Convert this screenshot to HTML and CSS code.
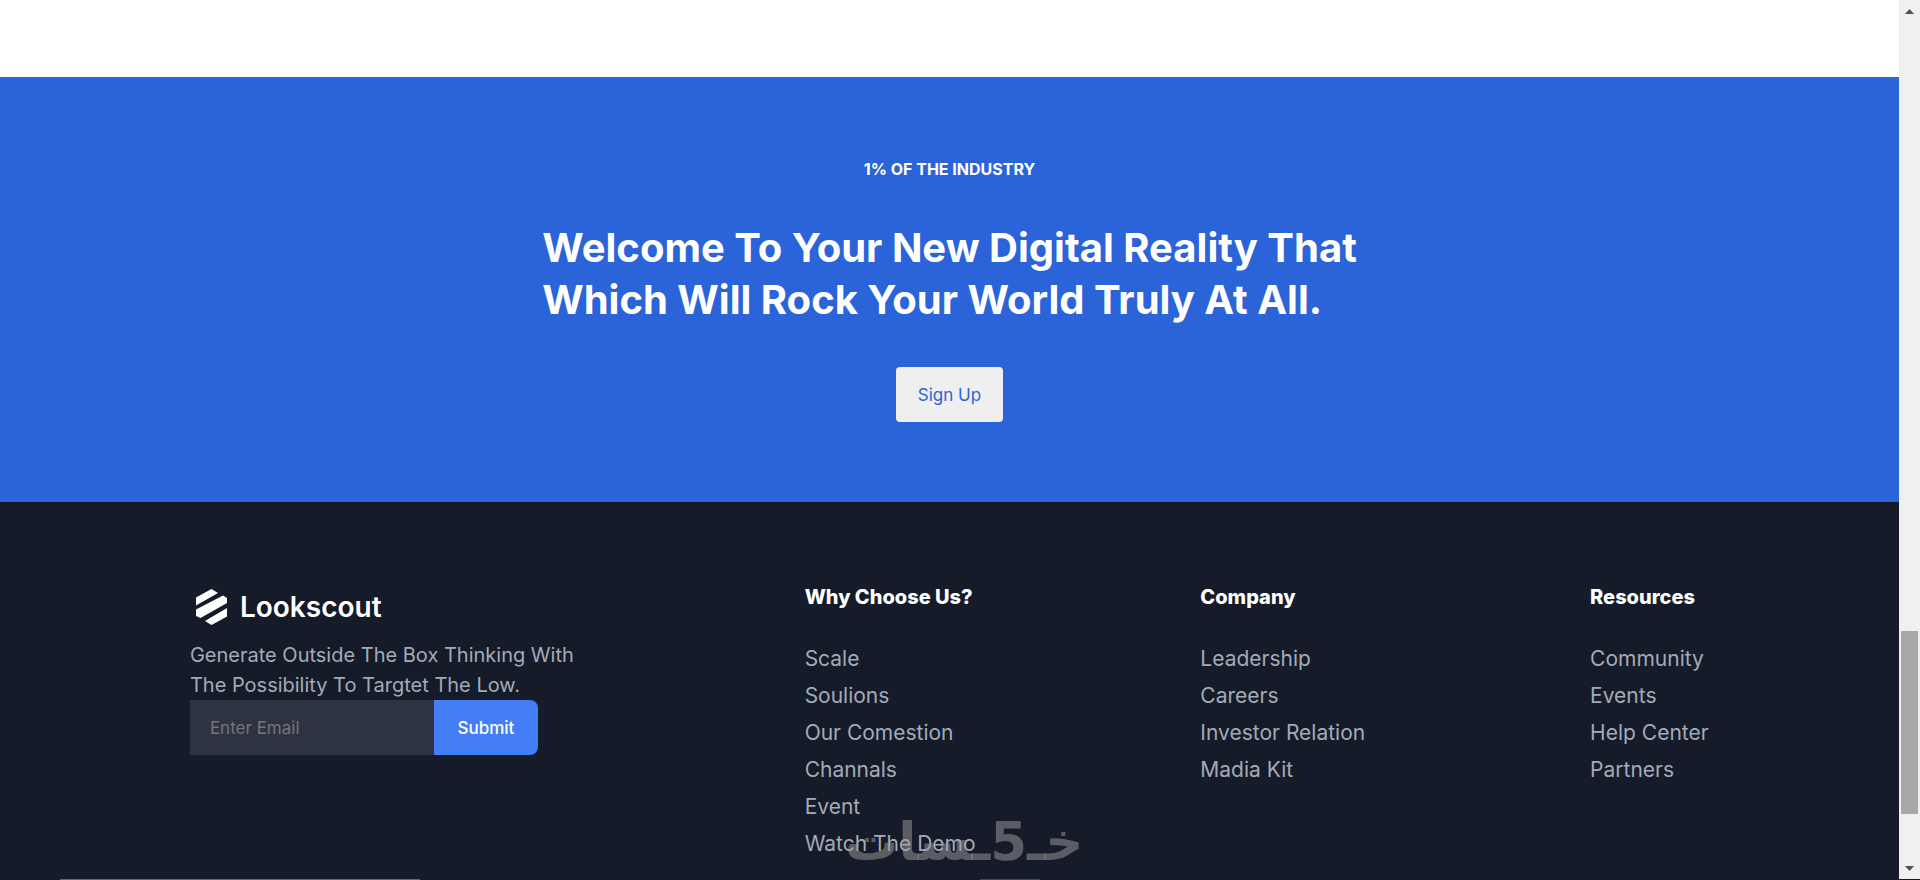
FILE: index.html
```
<!DOCTYPE html>
<html lang="en">
<head>
	<meta charset="utf-8">
	<title>Lookscout</title>
	<link rel="stylesheet" href="styles.css">
</head>
<body>
	<div class="page">
		<section class="banner">
			<p class="eyebrow">1% OF THE INDUSTRY</p>
			<h2>Welcome To Your New Digital Reality That<br>Which Will Rock Your World Truly At All.</h2>
			<button class="signup" type="button">Sign Up</button>
		</section>

		<footer class="footer">
			<div class="about">
				<a class="logo" href="#">
					<svg width="31" height="36" viewBox="0 0 31 36" fill="#fff" aria-hidden="true">
						<path d="M0 8.500 15.500 0 22 4 0 16.500z"/>
						<path d="M0 20.500 27 6.500 31 9V14L4.500 29 0 27z"/>
						<path d="M31 19V27.500L15.500 36 9 32z"/>
					</svg>
					<span>Lookscout</span>
				</a>
				<p>Generate Outside The Box Thinking With<br>The Possibility To Targtet The Low.</p>
				<form class="subscribe">
					<input type="email" placeholder="Enter Email" aria-label="Email">
					<button type="button">Submit</button>
				</form>
			</div>
			<div class="links why">
				<h3>Why Choose Us?</h3>
				<ul>
					<li><a href="#">Scale</a></li>
					<li><a href="#">Soulions</a></li>
					<li><a href="#">Our Comestion</a></li>
					<li><a href="#">Channals</a></li>
					<li><a href="#">Event</a></li>
					<li><a href="#">Watch The Demo</a></li>
				</ul>
			</div>
			<div class="links company">
				<h3>Company</h3>
				<ul>
					<li><a href="#">Leadership</a></li>
					<li><a href="#">Careers</a></li>
					<li><a href="#">Investor Relation</a></li>
					<li><a href="#">Madia Kit</a></li>
				</ul>
			</div>
			<div class="links resources">
				<h3>Resources</h3>
				<ul>
					<li><a href="#">Community</a></li>
					<li><a href="#">Events</a></li>
					<li><a href="#">Help Center</a></li>
					<li><a href="#">Partners</a></li>
				</ul>
			</div>
		</footer>
	</div>

	<div class="scrollbar" aria-hidden="true">
		<svg width="9" height="5" viewBox="0 0 9 5"><path d="M0 5 4.500 0 9 5z"/></svg>
		<div class="track"><div class="thumb"></div></div>
		<svg width="9" height="5" viewBox="0 0 9 5"><path d="M0 0H9L4.500 5z"/></svg>
	</div>

	<div class="watermark" dir="rtl" lang="ar">خـ5ـسات</div>
	<div class="edge"><span class="edge-left"></span><span class="edge-mid"></span></div>
</body>
</html>
```
FILE: styles.css
```
* {
	box-sizing: border-box;
	margin: 0;
	padding: 0;
}
body {
	display: flex;
	position: relative;
	height: 100vh;
	overflow: hidden;
	background: #fff;
	font-family: Inter, "Open Sans", sans-serif;
	font-size: 20px;
	line-height: 30px;
}
a {
	color: inherit;
	text-decoration: none;
}
button, input {
	border: none;
	font-family: inherit;
	font-size: 17px;
}
.page {
	flex: 1;
	display: flex;
	flex-direction: column;
	padding-top: 77px;
}

/* banner */
.banner {
	display: flex;
	flex-direction: column;
	align-items: center;
	padding: 80px 20px;
	background: #2b64d9;
	color: #fff;
}
.eyebrow {
	font-size: 16px;
	font-weight: 700;
	line-height: 24px;
}
.banner h2 {
	margin: 41px 0;
	font-size: 40px;
	font-weight: 700;
	line-height: 52px;
}
.signup {
	width: 107px;
	height: 55px;
	border-radius: 4px;
	background: #efefef;
	color: #2b64d9;
}

/* footer */
.footer {
	flex: 1;
	display: flex;
	justify-content: space-between;
	padding: 80px 10% 0;
	background: #151b28;
	color: #a3abb8;
	white-space: nowrap;
}
.about {
	width: 390px;
}
.logo {
	display: flex;
	align-items: center;
	gap: 13px;
	height: 50px;
	margin-bottom: 8px;
	padding-left: 6px;
	color: #fff;
	font-size: 28px;
	font-weight: 600;
}
.subscribe {
	display: flex;
	height: 55px;
}
.subscribe input {
	width: 244px;
	padding: 0 20px;
	background: #2d3342;
	color: #fff;
}
.subscribe input::placeholder {
	color: #757575;
}
.subscribe button {
	width: 104px;
	border-radius: 0 8px 8px 0;
	background: #437ef7;
	color: #fff;
	font-weight: 500;
}
.why {
	width: 171px;
}
.company {
	width: 165px;
}
.resources {
	width: 119px;
}
.links h3 {
	margin-bottom: 28px;
	color: #fff;
	font-size: 20px;
	font-weight: 800;
}
.links ul {
	list-style: none;
}
.links li {
	font-size: 21px;
	line-height: 37px;
}

/* scrollbar */
.scrollbar {
	display: flex;
	flex-direction: column;
	align-items: center;
	width: 21px;
	padding: 9px 2px;
	background: #f0f0f0;
}
.scrollbar svg {
	fill: #505050;
}
.track {
	flex: 1;
	width: 17px;
	padding: 8px 0;
}
.thumb {
	height: 183px;
	margin-top: 609px;
	background: #a8a8a8;
}

/* watermark over the footer */
.watermark {
	position: absolute;
	left: 845px;
	bottom: 8px;
	color: rgba(160, 160, 160, 0.5);
	font-family: "DejaVu Sans", sans-serif;
	font-size: 53px;
	font-weight: 700;
	line-height: 60px;
}
.edge {
	display: flex;
	gap: 560px;
	position: absolute;
	left: 0;
	right: 0;
	bottom: 0;
	height: 1px;
	padding-left: 60px;
	background: #1f1520;
}
.edge-left {
	width: 360px;
	background: #6b6670;
}
.edge-mid {
	width: 60px;
	background: #4a4655;
}
```
